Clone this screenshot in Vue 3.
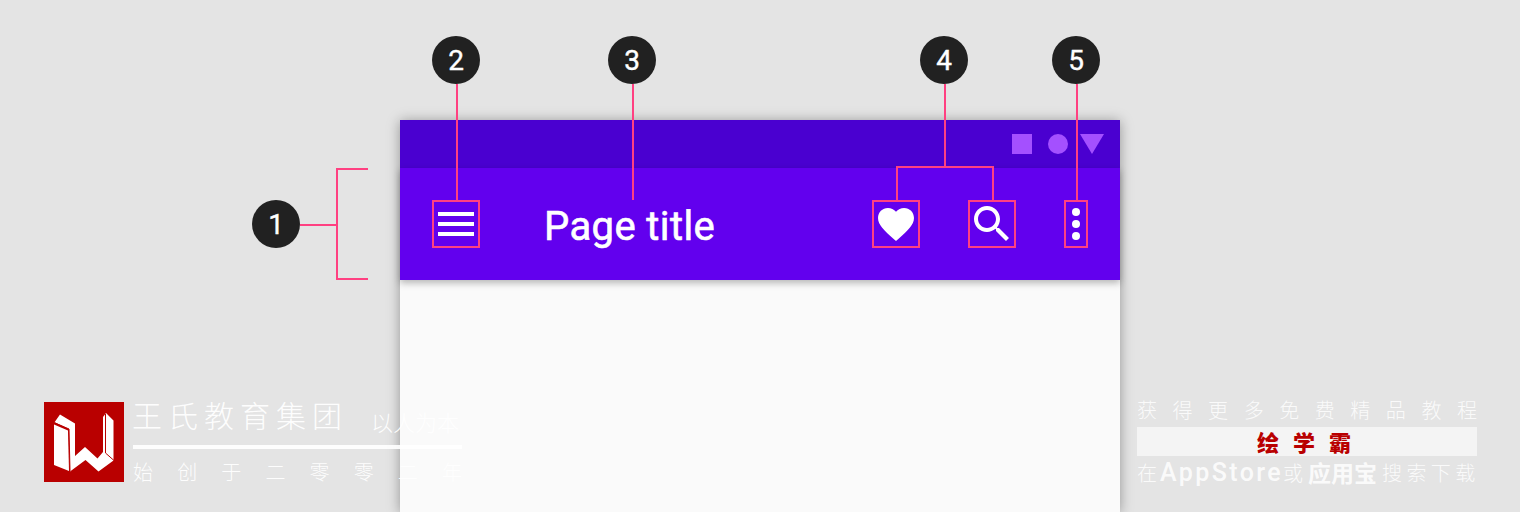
<template>
  <div class="page">
    <div class="phone">
      <div class="status-bar">
        <span class="status-square"></span>
        <span class="status-circle"></span>
        <svg class="status-triangle" width="24" height="20" viewBox="0 0 24 20"><path d="M0 0h24L12 20z" /></svg>
      </div>
      <div class="toolbar">
        <div class="icon-box menu-box">
          <span></span><span></span><span></span>
        </div>
        <div class="page-title">Page title</div>
        <div class="icon-box heart-box">
          <svg width="36" height="33" viewBox="2 3 20 18.35"><path d="M12 21.35l-1.45-1.32C5.4 15.36 2 12.28 2 8.5 2 5.42 4.42 3 7.5 3c1.74 0 3.41.81 4.5 2.09C13.09 3.81 14.76 3 16.5 3 19.58 3 22 5.42 22 8.5c0 3.78-3.4 6.86-8.55 11.54L12 21.35z" /></svg>
        </div>
        <div class="icon-box search-box">
          <svg width="48" height="48" viewBox="0 0 24 24"><path d="M15.5 14h-.79l-.28-.27C15.41 12.59 16 11.11 16 9.5 16 5.91 13.09 3 9.5 3S3 5.91 3 9.5 5.91 16 9.5 16c1.61 0 3.09-.59 4.23-1.57l.27.28v.79l5 4.99L20.49 19l-4.99-5zm-6 0C7.01 14 5 11.99 5 9.5S7.01 5 9.5 5 14 7.01 14 9.5 11.99 14 9.5 14z" /></svg>
        </div>
        <div class="icon-box more-box">
          <span></span><span></span><span></span>
        </div>
      </div>
      <div class="content"></div>
    </div>

    <!-- callout lines -->
    <svg class="callouts" width="1520" height="512" viewBox="0 0 1520 512">
      <path d="M300 225H337M368 169H337V279H368" />
      <path d="M457 84V200" />
      <path d="M633 84V200" />
      <path d="M945 84V167M897 200V167H993V200" />
      <path d="M1077 84V200" />
    </svg>
    <div v-for="m in markers" :key="m.n" class="marker" :style="{ left: m.x + 'px', top: m.y + 'px' }">{{ m.n }}</div>

    <!-- watermark left -->
    <div class="brand">
      <svg class="brand-logo" width="80" height="80" viewBox="0 0 80 80">
        <rect width="80" height="80" fill="#b90000" />
        <path fill="#fff" d="M10 21L16 12.500 31 21.500V54L41 45 53.500 56.500 59 50V15L62 11 69.500 18.500V58.500L54.500 69.500 41.500 58 26 69.500 25 27 10 20z" />
        <path fill="#fff" d="M10 22.500L24 28.500 25 69 10 63z" />
        <path fill="none" stroke="#b90000" stroke-width="1" d="M10 20.500L25 27 26 69M61.500 12V51L70 58.500" />
      </svg>
      <div class="brand-text">
        <div class="brand-top">
          <span class="brand-name">王氏教育集团</span>
          <span class="brand-motto">以人为本</span>
        </div>
        <div class="brand-rule"></div>
        <div class="brand-since">
          <span v-for="(c, i) in since" :key="i">{{ c }}</span>
        </div>
      </div>
    </div>

    <!-- watermark right -->
    <div class="promo">
      <div class="promo-line">
        <span v-for="(c, i) in promo" :key="i">{{ c }}</span>
      </div>
      <div class="promo-app">绘学霸</div>
      <div class="promo-store">
        <span>在</span><b class="store-name">AppStore</b><span>或</span><b class="store-cn">应用宝</b><span class="store-end">搜索下载</span>
      </div>
    </div>
  </div>
</template>

<script setup>
const markers = [
  { n: 1, x: 252, y: 200 },
  { n: 2, x: 432, y: 36 },
  { n: 3, x: 608, y: 36 },
  { n: 4, x: 920, y: 36 },
  { n: 5, x: 1052, y: 36 }
]
const since = '始创于二零零二年'.split('')
const promo = '获得更多免费精品教程'.split('')
</script>

<style>
html,
body {
  margin: 0;
}
</style>

<style scoped>
.page {
  position: relative;
  width: 1520px;
  height: 512px;
  overflow: hidden;
  background: #e4e4e4;
  font-family: Roboto, "Noto Sans CJK SC", sans-serif;
  padding: 120px 0 0 400px;
  box-sizing: border-box;
}

.phone {
  width: 720px;
  height: 392px;
  display: flex;
  flex-direction: column;
  box-shadow: 0 1px 12px rgba(0, 0, 0, 0.35);
}

.status-bar {
  height: 48px;
  background: #4a00d0;
  display: flex;
  align-items: center;
  justify-content: flex-end;
  padding-right: 16px;
}

.status-square {
  width: 20px;
  height: 20px;
  background: #a450ff;
  margin-right: 16px;
}

.status-circle {
  width: 20px;
  height: 20px;
  border-radius: 50%;
  background: #a450ff;
  margin-right: 12px;
}

.status-triangle path {
  fill: #a450ff;
}

.toolbar {
  height: 112px;
  background: #6200ee;
  display: flex;
  align-items: center;
  padding: 0 32px;
  box-shadow: 0 3px 7px rgba(0, 0, 0, 0.28);
  position: relative;
}

.icon-box {
  box-sizing: border-box;
  width: 48px;
  height: 48px;
  border: 2px solid #ff4081;
  display: flex;
  align-items: center;
  justify-content: center;
  flex: none;
}

.icon-box svg {
  fill: #fff;
  display: block;
  flex: none;
}

.menu-box {
  flex-direction: column;
  gap: 6px;
}

.menu-box span {
  width: 36px;
  height: 4px;
  background: #fff;
}

.page-title {
  margin-left: 64px;
  margin-top: 6px;
  color: #fff;
  font-size: 40px;
  font-weight: 400;
  letter-spacing: 0.4px;
  line-height: 48px;
  -webkit-text-stroke: 0.6px #fff;
}

.heart-box {
  margin-left: auto;
}

.search-box {
  margin-left: 48px;
}

.more-box {
  width: 24px;
  margin-left: 48px;
  flex-direction: column;
  gap: 4px;
}

.more-box span {
  width: 8px;
  height: 8px;
  border-radius: 50%;
  background: #fff;
}

.content {
  flex: 1;
  background: #fafafa;
}

.callouts {
  position: absolute;
  left: 0;
  top: 0;
}

.callouts path {
  fill: none;
  stroke: #ff4081;
  stroke-width: 2;
}

.marker {
  position: absolute;
  width: 48px;
  height: 48px;
  border-radius: 50%;
  background: #212121;
  color: #fff;
  font-size: 28px;
  font-weight: 400;
  line-height: 50px;
  text-align: center;
  -webkit-text-stroke: 0.4px #fff;
}

.brand {
  position: absolute;
  left: 44px;
  top: 402px;
  display: flex;
  color: rgba(255, 255, 255, 0.95);
  font-family: "Noto Sans CJK SC", sans-serif;
  font-weight: 300;
}

.brand-logo {
  display: block;
  flex: none;
}

.brand-text {
  width: 329px;
  margin-left: 9px;
}

.brand-top {
  display: flex;
  align-items: flex-end;
  height: 43px;
  white-space: nowrap;
}

.brand-name {
  font-size: 30px;
  line-height: 30px;
  letter-spacing: 6px;
  margin-left: -1px;
  margin-bottom: 16px;
}

.brand-motto {
  margin-left: 23px;
  font-size: 22px;
  line-height: 22px;
  margin-bottom: 13px;
}

.brand-rule {
  height: 4px;
  background: #fff;
  opacity: 0.9;
}

.brand-since {
  display: flex;
  justify-content: space-between;
  margin-top: 13px;
  font-size: 20px;
  line-height: 20px;
}

.promo {
  position: absolute;
  left: 1137px;
  top: 400px;
  width: 340px;
  color: rgba(255, 255, 255, 0.85);
  font-family: "Noto Sans CJK SC", sans-serif;
  font-weight: 300;
}

.promo-line {
  display: flex;
  justify-content: space-between;
  font-size: 20px;
  line-height: 20px;
}

.promo-app {
  margin-top: 7px;
  height: 29px;
  background: rgba(255, 255, 255, 0.6);
  color: #b90000;
  font-size: 22px;
  font-weight: 900;
  line-height: 29px;
  letter-spacing: 14px;
  padding-left: 8px;
  text-align: center;
  box-sizing: border-box;
}

.promo-store {
  display: flex;
  align-items: center;
  height: 30px;
  margin-top: 1px;
  font-size: 20px;
  white-space: nowrap;
}

.promo-store > * {
  flex: none;
}

.store-name {
  margin-left: 3px;
  font-family: Roboto, sans-serif;
  font-size: 25px;
  font-weight: 500;
  letter-spacing: 2.4px;
}

.store-cn {
  margin-left: 5px;
  font-size: 23px;
  font-weight: 700;
}

.store-end {
  margin-left: 5px;
  letter-spacing: 4.4px;
}
</style>
